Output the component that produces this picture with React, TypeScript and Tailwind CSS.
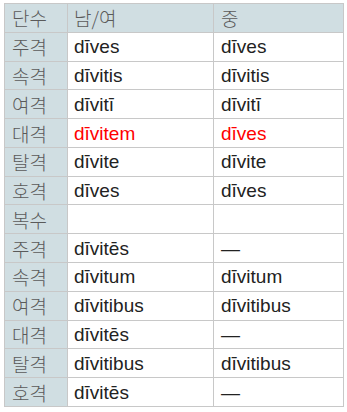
import React from "react";

type Row = { k: string; a: string; b: string; red?: boolean; head?: boolean };

const rows: Row[] = [
  { k: "단수", a: "남/여", b: "중", head: true },
  { k: "주격", a: "dīves", b: "dīves" },
  { k: "속격", a: "dīvitis", b: "dīvitis" },
  { k: "여격", a: "dīvitī", b: "dīvitī" },
  { k: "대격", a: "dīvitem", b: "dīves", red: true },
  { k: "탈격", a: "dīvite", b: "dīvite" },
  { k: "호격", a: "dīves", b: "dīves" },
  { k: "복수", a: "", b: "" },
  { k: "주격", a: "dīvitēs", b: "—" },
  { k: "속격", a: "dīvitum", b: "dīvitum" },
  { k: "여격", a: "dīvitibus", b: "dīvitibus" },
  { k: "대격", a: "dīvitēs", b: "—" },
  { k: "탈격", a: "dīvitibus", b: "dīvitibus" },
  { k: "호격", a: "dīvitēs", b: "—" },
];

const ko = "font-['Noto_Sans_CJK_KR','Noto_Sans',sans-serif] font-light";
const lat = "font-['Liberation_Sans',Arial,sans-serif]";

export default function App() {
  return (
    <div className="w-[347px] h-[412px] bg-white pt-[3px] pl-[4px]">
      <div className="grid w-[340px] grid-cols-[62px_145px_129px] gap-px bg-[#c8c8c8] p-px">
        {rows.map((r, i) => (
          <React.Fragment key={i}>
            <div
              className={`h-[27.79px] flex items-center pl-[7px] bg-[#d0dee2] text-[#5a5a5a] text-[19px] leading-none ${ko}`}
            >
              {r.k}
            </div>
            <div
              className={`h-[27.79px] flex items-center pl-[6px] text-[19px] leading-none ${
                r.head ? `bg-[#d0dee2] text-[#5a5a5a] ${ko}` : `bg-white ${lat}`
              } ${r.red ? "text-[#ff0000]" : r.head ? "" : "text-[#222]"}`}
            >
              {r.a}
            </div>
            <div
              className={`h-[27.79px] flex items-center pl-[7px] text-[19px] leading-none ${
                r.head ? `bg-[#d0dee2] text-[#5a5a5a] ${ko}` : `bg-white ${lat}`
              } ${r.red ? "text-[#ff0000]" : r.head ? "" : "text-[#222]"}`}
            >
              {r.b}
            </div>
          </React.Fragment>
        ))}
      </div>
    </div>
  );
}
